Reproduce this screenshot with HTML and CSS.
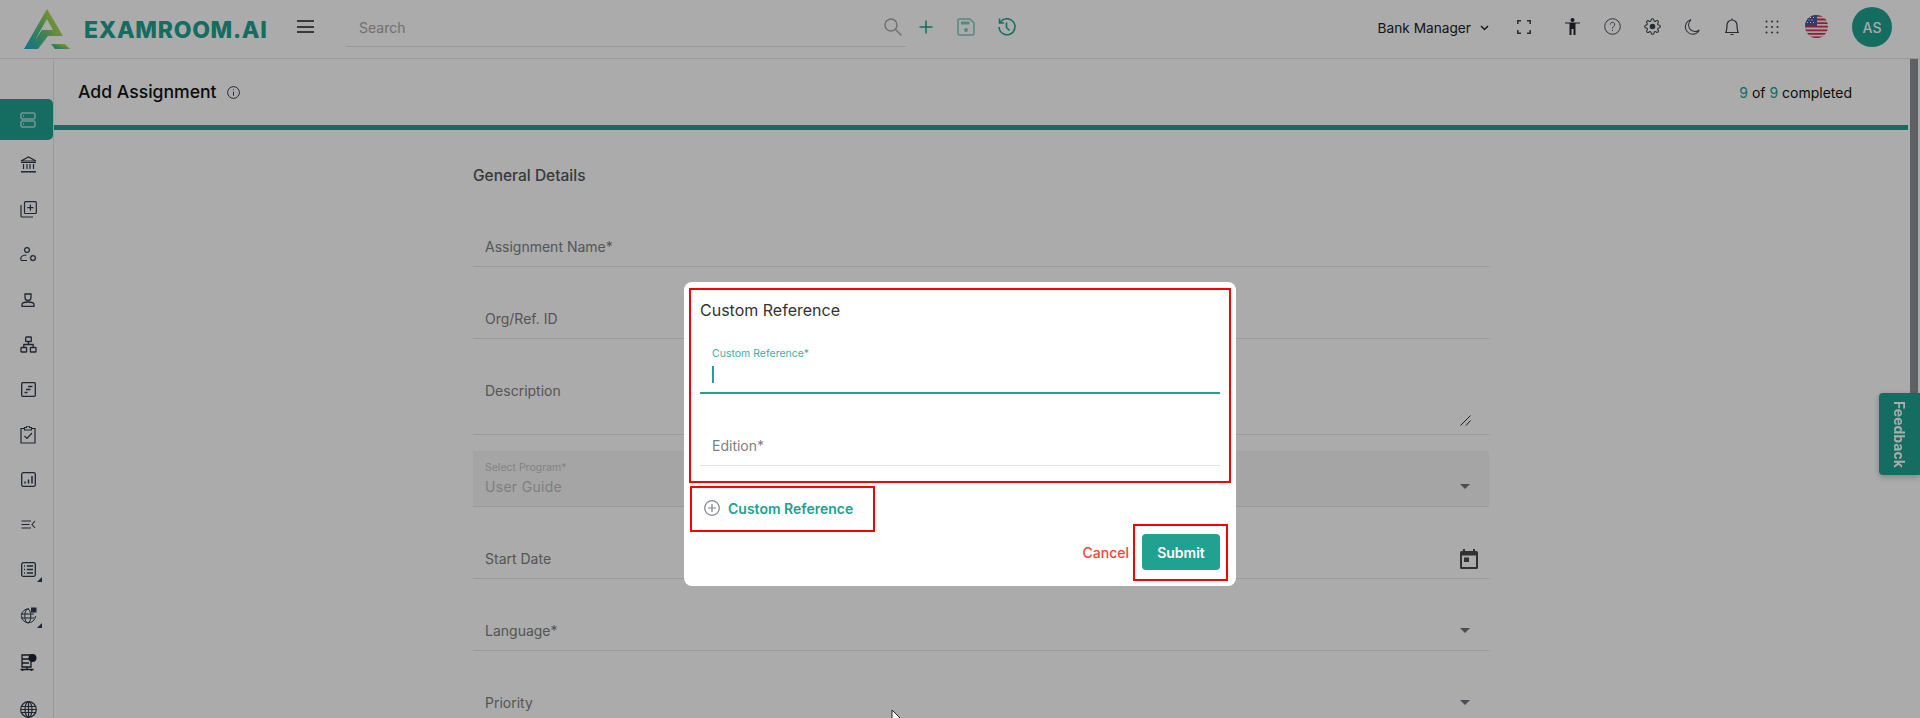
FILE: index.html
```html
<!DOCTYPE html>
<html lang="en">
<head>
<meta charset="utf-8">
<title>Add Assignment</title>
<link rel="stylesheet" href="styles.css">
</head>
<body>
<header class="topbar">
  <a class="brand">
    <svg class="logo" width="46" height="40" viewBox="0 0 46 40">
      <defs><linearGradient id="lg" x1="0" y1="1" x2="1" y2="0.35"><stop offset="0" stop-color="#1fa8d8"/><stop offset="0.5" stop-color="#55c47e"/><stop offset="1" stop-color="#cfe232"/></linearGradient></defs>
      <path fill="url(#lg)" fill-rule="evenodd" d="M23 0L39 27H24L14 40H0ZM23 10L11 31L18 21H29Z"/>
      <path fill="url(#lg)" d="M27 35H41L46 40H31Z"/>
    </svg>
    <span class="brand-text">EXAMROOM.AI</span>
  </a>
  <button class="burger"><span></span><span></span><span></span></button>
  <div class="search">
    <span class="search-text">Search</span>
    <svg width="18" height="18" viewBox="0 0 18 18" fill="none" stroke="#a6a6a6" stroke-width="1.4"><circle cx="7" cy="7" r="6"/><path d="M11.3 11.3L17.5 17.5"/></svg>
  </div>
  <div class="slot"><svg width="14" height="14" viewBox="0 0 14 14" stroke="#20a191" stroke-width="1.5"><path d="M7 0.5V13.5M0.5 7H13.5"/></svg></div>
  <div class="slot"><svg width="18" height="18" viewBox="0 0 18 18" fill="none" stroke="#83c9bf" stroke-width="1.5"><path d="M2.5 1H13L17 5V15.500a1.500 1.500 0 0 1-1.500 1.500H2.500A1.500 1.500 0 0 1 1 15.500V2.500A1.500 1.500 0 0 1 2.500 1Z"/><path d="M4 3.500H12.500V6.500H4Z" fill="#83c9bf" stroke="none"/><circle cx="9" cy="12" r="2" fill="#83c9bf" stroke="none"/></svg></div>
  <div class="slot"><svg width="19" height="18" viewBox="0 0 19 18" fill="none" stroke="#20a191" stroke-width="1.500"><path d="M3.200 4.500A8 8 0 1 1 2 9"/><path d="M2.500 0.500V5H7" /><path d="M9.500 4.500V9.500L12.500 12.500"/></svg></div>

  <div class="role">Bank Manager
    <svg width="9" height="6" viewBox="0 0 9 6" fill="none" stroke="#222" stroke-width="1.500"><path d="M1 1L4.500 4.500L8 1"/></svg>
  </div>
  <div class="tool tool-wide"><svg width="14" height="14" viewBox="0 0 14 14" fill="none" stroke="#3a3f4b" stroke-width="1.500"><path d="M0.800 4V0.800H4M10 0.800H13.200V4M13.200 10V13.200H10M4 13.200H0.800V10"/></svg></div>
  <div class="tool"><svg width="15" height="17" viewBox="0 0 15 17" fill="#2a2530"><circle cx="7.500" cy="2" r="2"/><path d="M0 4.500H15V5.500H10.500V17H8.500V11H6.500V17H4.500V5.500H0Z"/></svg></div>
  <div class="tool"><svg width="17" height="17" viewBox="0 0 17 17" fill="none" stroke="#4a4f5c" stroke-width="1"><circle cx="8.500" cy="8.500" r="7.800"/><path d="M6.300 6.500a2.200 2.200 0 1 1 3.500 1.800C8.900 9 8.500 9.500 8.500 10.500M8.500 12V13"/></svg></div>
  <div class="tool"><svg width="17" height="17" viewBox="0 0 24 24" fill="none" stroke="#3a3f4b" stroke-width="1.500"><path d="M19.4 15a1.650 1.650 0 0 0 .33 1.820l.06.06a2 2 0 0 1 0 2.830 2 2 0 0 1-2.830 0l-.06-.06a1.650 1.650 0 0 0-1.820-.33 1.650 1.650 0 0 0-1 1.510V21a2 2 0 0 1-2 2 2 2 0 0 1-2-2v-.09A1.650 1.650 0 0 0 9 19.400a1.650 1.650 0 0 0-1.820.33l-.06.06a2 2 0 0 1-2.830 0 2 2 0 0 1 0-2.830l.06-.06a1.650 1.650 0 0 0 .33-1.820 1.650 1.650 0 0 0-1.510-1H3a2 2 0 0 1-2-2 2 2 0 0 1 2-2h.09A1.650 1.650 0 0 0 4.600 9a1.650 1.650 0 0 0-.33-1.820l-.06-.06a2 2 0 0 1 0-2.830 2 2 0 0 1 2.830 0l.06.06a1.650 1.650 0 0 0 1.820.33H9a1.650 1.650 0 0 0 1-1.510V3a2 2 0 0 1 2-2 2 2 0 0 1 2 2v.09a1.650 1.650 0 0 0 1 1.510 1.650 1.650 0 0 0 1.820-.33l.06-.06a2 2 0 0 1 2.830 0 2 2 0 0 1 0 2.830l-.06.06a1.650 1.650 0 0 0-.33 1.820V9a1.650 1.650 0 0 0 1.510 1H21a2 2 0 0 1 2 2 2 2 0 0 1-2 2h-.09a1.650 1.650 0 0 0-1.510 1z"/><circle cx="12" cy="12" r="3.200" fill="#3a3f4b"/></svg></div>
  <div class="tool"><svg width="16" height="16" viewBox="0 0 16 16" fill="none" stroke="#4a4f5c" stroke-width="1.100"><path d="M7 .8A7.300 7.300 0 1 0 15.300 11 6.500 6.500 0 0 1 7 .8Z"/></svg></div>
  <div class="tool"><svg width="14" height="18" viewBox="0 0 14 18" fill="none" stroke="#3a3f4b" stroke-width="1.200"><path d="M0.500 14.500H13.500C12 13 12 11.500 12 7A5 5 0 0 0 2 7C2 11.500 2 13 0.500 14.500Z"/><path d="M7 0.500V2M5.500 16.500H8.500"/></svg></div>
  <div class="tool"><svg width="14" height="14" viewBox="0 0 14 14" fill="#3a3f4b"><circle cx="1.500" cy="1.500" r="1"/><circle cx="7" cy="1.500" r="1"/><circle cx="12.500" cy="1.500" r="1"/><circle cx="1.500" cy="7" r="1"/><circle cx="7" cy="7" r="1"/><circle cx="12.500" cy="7" r="1"/><circle cx="1.500" cy="12.500" r="1"/><circle cx="7" cy="12.500" r="1"/><circle cx="12.500" cy="12.500" r="1"/></svg></div>
  <div class="lang">
    <svg width="23" height="23" viewBox="0 0 23 23">
      <defs><clipPath id="fc"><circle cx="11.500" cy="11.500" r="11.500"/></clipPath></defs>
      <g clip-path="url(#fc)">
        <rect width="23" height="23" fill="#f2f2f2"/>
        <path d="M0 0H23V1.800H0ZM0 3.600H23V5.400H0ZM0 7.200H23V9H0ZM0 10.800H23V12.600H0ZM0 14.400H23V16.200H0ZM0 18H23V19.800H0ZM0 21.400H23V23H0Z" fill="#d8324a"/>
        <rect width="12" height="11" fill="#4a5a9e"/>
        <path d="M2 2h1v1H2zM5 2h1v1H5zM8 2h1v1H8zM3.500 4.500h1v1h-1zM6.500 4.500h1v1h-1zM2 7h1v1H2zM5 7h1v1H5zM8 7h1v1H8z" fill="#fff"/>
      </g>
    </svg>
  </div>
  <div class="avatar">AS</div>
</header>

<div class="main">
  <nav class="sidebar">
    <a class="nav nav-active"><svg width="16" height="16" viewBox="0 0 16 16" fill="none" stroke="#ffffff" stroke-width="1"><rect x="1" y="1" width="14" height="6" rx="1"/><rect x="1" y="9" width="14" height="6" rx="1"/><path d="M3 4H4M3 12H4"/></svg></a>
    <a class="nav"><svg width="17" height="17" viewBox="0 0 17 17" fill="none" stroke="#2f3b4c" stroke-width="1.200"><path d="M1 5L8.500 1L16 5Z"/><path d="M1 6.500H16M3.500 8V13M7 8V13M10 8V13M13.500 8V13" /><path d="M1 15.800H16" stroke-width="1.500"/></svg></a>
    <a class="nav"><svg width="17" height="17" viewBox="0 0 17 17" fill="none" stroke="#2f3b4c" stroke-width="1.200"><rect x="4.500" y="0.700" width="11.800" height="11.800" rx="1"/><path d="M1 4V15a1 1 0 0 0 1 1H13M10.400 3.500V9.700M7.300 6.600H13.500"/></svg></a>
    <a class="nav"><svg width="17" height="16" viewBox="0 0 17 16" fill="none" stroke="#2f3b4c" stroke-width="1.200"><circle cx="7" cy="3" r="2.400"/><path d="M0.800 13V11.500C0.800 9.500 3.500 8 6.500 8M0.800 13.500H7"/><circle cx="13" cy="11" r="2.300" stroke-width="1.100"/><path d="M13 7.800V8.700M13 13.300V14.200M9.800 11H10.700M15.300 11H16.200M10.700 8.700L11.400 9.400M14.600 12.600L15.300 13.300M15.300 8.700L14.600 9.400M11.400 12.600L10.700 13.300"/></svg></a>
    <a class="nav"><svg width="14" height="14" viewBox="0 0 14 14" fill="none" stroke="#2f3b4c" stroke-width="1.300"><path d="M4 1H10V4.500a3 3 0 0 1-6 0Z"/><path d="M1 13.300V11.500C1 10 3 9 7 9S13 10 13 11.500V13.300Z"/></svg></a>
    <a class="nav"><svg width="17" height="17" viewBox="0 0 17 17" fill="none" stroke="#2f3b4c" stroke-width="1.300"><rect x="5.700" y="1" width="5.600" height="4.500" rx=".6"/><rect x="1" y="11.500" width="5.600" height="4.500" rx=".6"/><rect x="10.400" y="11.500" width="5.600" height="4.500" rx=".6"/><path d="M8.500 5.500V8.500M3.800 11.500V8.500H13.200V11.500"/></svg></a>
    <a class="nav"><svg width="15" height="15" viewBox="0 0 15 15" fill="none" stroke="#2f3b4c" stroke-width="1.300"><rect x="0.700" y="0.700" width="13.600" height="13.600" rx="1"/><path d="M7 4.500H11.500M5 7.500H9.500M3.500 10.500H6.500" /></svg></a>
    <a class="nav"><svg width="16" height="18" viewBox="0 0 16 18" fill="none" stroke="#2f3b4c" stroke-width="1.200"><path d="M4.500 2.500H1V17H15V2.500H11.500"/><path d="M4.500 1.500H6.500A1.500 1.500 0 0 1 9.500 1.500H11.500V4H4.500Z"/><path d="M4.500 10L7 12.500L12 7"/></svg></a>
    <a class="nav"><svg width="15" height="15" viewBox="0 0 15 15" fill="none" stroke="#2f3b4c" stroke-width="1.300"><rect x="0.700" y="0.700" width="13.600" height="13.600" rx="1.500"/><path d="M4 11.500V9.500M7.500 11.500V7.500M11 11.500V4" stroke-width="1.500"/></svg></a>
    <a class="nav"><svg width="15" height="9" viewBox="0 0 15 9" fill="none" stroke="#2f3b4c" stroke-width="1.100"><path d="M0.500 1H10M0.500 4.500H8.500M0.500 8H10M14 1L11 4.500L14 8"/></svg></a>
    <a class="nav nav-more"><svg width="15" height="15" viewBox="0 0 15 15" fill="none" stroke="#2f3b4c" stroke-width="1.300"><rect x="0.700" y="0.700" width="13.600" height="13.600" rx="1.500"/><path d="M3 4H4M3 7.500H4M3 11H4M5.800 4H12M5.800 7.500H12M5.800 11H12"/></svg></a>
    <a class="nav nav-more"><svg width="17" height="17" viewBox="0 0 17 17" fill="none" stroke="#2f3b4c" stroke-width="1"><path d="M9 1.800A7 7 0 1 0 15.500 9"/><ellipse cx="7.800" cy="9" rx="3" ry="7"/><path d="M1 7H14M1 11H14"/><rect x="11" y="0.500" width="5.500" height="5" fill="#2f3b4c" stroke="none"/></svg></a>
    <a class="nav nav-late"><svg width="17" height="18" viewBox="0 0 17 18" fill="none" stroke="#1c2533" stroke-width="1.300"><path d="M2 1H11V13H2ZM2 5H9M2 9H9"/><path d="M0.500 15.500H13.500M2.500 17V15.500M11.500 17V15.500M7 13V15.500"/><circle cx="12.500" cy="4" r="4" fill="#1c2533" stroke="none"/></svg></a>
    <a class="nav nav-late"><svg width="17" height="17" viewBox="0 0 17 17" fill="none" stroke="#2f3b4c" stroke-width="1.200"><circle cx="8.500" cy="8.500" r="7.800"/><ellipse cx="8.500" cy="8.500" rx="3.500" ry="7.800"/><path d="M1 5.500H16M1 8.500H16M1 11.500H16M8.500 1V16"/></svg></a>
  </nav>

  <section class="content">
    <div class="pagehead">
      <h1 class="pagetitle">Add Assignment</h1>
      <svg class="info" width="13" height="13" viewBox="0 0 13 13" fill="none" stroke="#3a3f4b" stroke-width="1"><circle cx="6.500" cy="6.500" r="5.900"/><path d="M6.500 5.800V9.700M6.500 3.300V4.300"/></svg>
      <div class="steps"><b>9</b> of <b>9</b> completed</div>
    </div>
    <div class="progress"></div>
    <form class="form">
      <h2 class="section-title">General Details</h2>
      <div class="field"><span class="flabel">Assignment Name*</span></div>
      <div class="field"><span class="flabel">Org/Ref. ID</span></div>
      <div class="field field-area"><span class="flabel">Description</span>
        <svg class="resizer" width="11" height="11" viewBox="0 0 11 11" stroke="#333" stroke-width="1"><path d="M0.500 10.500L10.500 0.500M6 10.500L10.500 5.500"/></svg>
      </div>
      <div class="field field-disabled">
        <div class="stack"><span class="fsmall">Select Program*</span><span class="fvalue">User Guide</span></div>
        <i class="caret-down"></i>
      </div>
      <div class="field"><span class="flabel">Start Date</span>
        <svg class="cal" width="18" height="20" viewBox="0 0 18 20" fill="#4a4a4a"><path d="M3 0H5V2H13V0H15V2H16.500A1.500 1.500 0 0 1 18 3.500V18.500A1.500 1.500 0 0 1 16.500 20H1.500A1.500 1.500 0 0 1 0 18.500V3.500A1.500 1.500 0 0 1 1.500 2H3ZM2 6.500V18H16V6.500ZM4 8.500H9V13H4Z" fill-rule="evenodd"/></svg>
      </div>
      <div class="field"><span class="flabel">Language*</span><i class="caret-down"></i></div>
      <div class="field"><span class="flabel">Priority</span><i class="caret-down"></i></div>
    </form>
  </section>

  <div class="scrolltrack"><div class="scrollthumb"></div></div>
</div>

<div class="feedback"><span>Feedback</span></div>

<div class="overlay">
  <div class="modal">
    <h3 class="modal-title">Custom Reference</h3>
    <div class="mfield mfield-focus">
      <span class="mlabel-small">Custom Reference*</span>
      <span class="mcaret"></span>
    </div>
    <div class="mfield"><span class="mlabel">Edition*</span></div>
    <div class="madd">
      <svg width="16" height="16" viewBox="0 0 16 16" fill="none" stroke="#7f8493" stroke-width="1.200"><circle cx="8" cy="8" r="7.300"/><path d="M8 4V12M4 8H12"/></svg>
      <span>Custom Reference</span>
    </div>
    <div class="mfoot">
      <button class="mcancel" type="button">Cancel</button>
      <button class="msubmit" type="button">Submit</button>
    </div>
    <div class="mark mark-fields"></div>
    <div class="mark mark-add"></div>
    <div class="mark mark-submit"></div>
  </div>
</div>
<svg class="pointer" width="10" height="16" viewBox="0 0 10 16"><path d="M1 1V13L4 10.500L6 15L8 14L6 9.500H9.500Z" fill="#fff" stroke="#222" stroke-width="1"/></svg>
</body>
</html>
```
FILE: styles.css
```css
* { box-sizing: border-box; }
html, body { height: 718px; }
body {
  margin: 0;
  overflow: hidden;
  background: #fff;
  font-family: Inter, "Liberation Sans", sans-serif;
  color: #222;
  display: flex;
  flex-direction: column;
}

/* top bar */
.topbar {
  height: 59px;
  flex: none;
  display: flex;
  align-items: center;
  padding: 0 28px 0 24px;
  border-bottom: 1px solid #e4e4e4;
}
.brand { display: flex; align-items: center; width: 273px; }
.logo { display: block; margin-top: -1px; }
.brand-text {
  margin-left: 14px;
  font-size: 23px;
  font-weight: 800;
  letter-spacing: 0.7px;
  color: #20a191;
  line-height: 28px;
  margin-top: 2px;
}
.burger {
  width: 17px;
  height: 13px;
  padding: 0;
  border: 0;
  background: none;
  display: flex;
  flex-direction: column;
  justify-content: space-between;
  margin-top: -5px;
}
.burger span { display: block; height: 2px; background: #555; }
.search {
  width: 560px;
  height: 39px;
  margin: -3px 0 0 32px;
  padding: 0 4px 0 13px;
  border-bottom: 1px solid #e4e4e4;
  display: flex;
  align-items: center;
  justify-content: space-between;
}
.search-text { font-size: 14px; color: #a6a8b0; }
.slot { width: 40px; height: 40px; display: flex; align-items: center; justify-content: center; margin-top: -4px; }
.slot:last-of-type { margin-left: -1px; }
.role {
  margin-left: auto;
  display: flex;
  align-items: center;
  gap: 9px;
  font-size: 13.7px;
  color: #222;
  margin-right: 15px;
  margin-top: -3px;
}
.tool { width: 40px; height: 40px; display: flex; align-items: center; justify-content: center; margin-top: -5px; }
.tool-wide { margin-right: 8px; }
.lang { width: 48px; height: 40px; display: flex; align-items: center; justify-content: center; margin-top: -5px; }
.avatar {
  width: 40px;
  height: 40px;
  margin-left: 12px;
  margin-top: -4px;
  border-radius: 50%;
  background: #20a191;
  color: #fff;
  font-size: 14px;
  font-weight: 500;
  display: flex;
  align-items: center;
  justify-content: center;
}

/* body */
.main { flex: 1; display: flex; min-height: 0; }
.sidebar {
  width: 54px;
  flex: none;
  padding-top: 40px;
  border-right: 1px solid #e4e4e4;
  overflow: hidden;
  display: flex;
  flex-direction: column;
  gap: 4px;
}
.nav {
  flex: none;
  position: relative;
  width: 53px;
  height: 41px;
  display: flex;
  align-items: center;
  justify-content: center;
  padding-left: 3px;
}
.nav-active { background: #20a191; border-radius: 0 5px 5px 0; }
.nav-more::after {
  content: "";
  position: absolute;
  left: 37px;
  bottom: 8px;
  width: 0;
  height: 0;
  border-left: 5px solid transparent;
  border-bottom: 5px solid #2f3b4c;
}
.nav-more + .nav-more { margin-top: 1px; }
.nav-late { margin-top: 2px; }

.content { flex: 1; min-width: 0; display: flex; flex-direction: column; }
.pagehead { height: 66px; flex: none; display: flex; align-items: center; padding: 0 56px 0 24px; }
.pagetitle { margin: 0; font-size: 17.6px; line-height: 24px; font-weight: 500; color: #111; }
.info { margin-left: 10px; }
.steps { margin-left: auto; font-size: 14px; color: #111; padding-top: 1px; }
.steps b { font-weight: 400; color: #20a191; }
.progress { height: 5px; flex: none; background: #20a191; }

.form { width: 1016px; margin: 0 auto; padding-top: 36px; }
.section-title { margin: 0 0 25px; font-size: 15.5px; line-height: 20px; font-weight: 500; color: #555; }
.field {
  position: relative;
  height: 56px;
  margin-bottom: 16px;
  padding: 0 12px 9px;
  border-bottom: 1px solid #e4e4e4;
  display: flex;
  align-items: flex-end;
  justify-content: space-between;
}
.flabel { font-size: 14px; line-height: 20px; color: #808080; }
.field-area { height: 80px; padding-top: 26px; align-items: flex-start; }
.resizer { position: absolute; right: 18px; bottom: 8px; }
.cal { margin-right: -1px; }
.field-disabled { background: #f6f6f6; }
.stack { display: flex; flex-direction: column; }
.fsmall { font-size: 10.5px; line-height: 14px; color: #c4c4c4; margin-bottom: 2px; }
.fvalue { font-size: 14px; line-height: 20px; color: #bdbdbd; letter-spacing: .3px; }
.caret-down {
  width: 0;
  height: 0;
  border-left: 5px solid transparent;
  border-right: 5px solid transparent;
  border-top: 5px solid #6f7280;
  margin: 0 7px 8px 0;
}

.scrolltrack { width: 12px; flex: none; padding-left: 2px; }
.scrollthumb { width: 8px; height: 334px; background: #8d9096; }

.feedback {
  position: fixed;
  right: 0;
  top: 393px;
  width: 41px;
  height: 82px;
  background: #20a191;
  border-radius: 4px 0 0 4px;
  box-shadow: 0 2px 6px rgba(0,0,0,.25);
  color: #fff;
  font-size: 14px;
  font-weight: 700;
  writing-mode: vertical-rl;
  display: flex;
  align-items: center;
  justify-content: center;
}

/* dialog */
.overlay {
  position: fixed;
  inset: 0;
  background: rgba(0,0,0,.33);
  display: flex;
  justify-content: center;
  padding-top: 282px;
}
.modal {
  position: relative;
  width: 552px;
  height: 304px;
  background: #fff;
  border-radius: 8px;
  padding: 16px;
}
.modal-title { margin: 0 0 16px; font-size: 16px; line-height: 24px; font-weight: 400; color: #333; }
.mfield {
  height: 56px;
  margin-bottom: 16px;
  padding: 0 12px 9px;
  border-bottom: 1px solid #e4e4e4;
  display: flex;
  flex-direction: column;
  justify-content: flex-end;
}
.mfield-focus { border-bottom: 2px solid #20a191; }
.mlabel { font-size: 14px; line-height: 20px; color: #808080; }
.mlabel-small { font-size: 10.5px; line-height: 14px; color: #20a191; opacity: .85; margin-bottom: 5px; }
.mcaret { width: 2px; height: 17px; background: #20a191; }
.madd {
  margin: 32px 0 16px 4px;
  height: 20px;
  display: flex;
  align-items: center;
  gap: 8px;
  font-size: 14px;
  font-weight: 600;
  color: #20a191;
}
.mfoot { display: flex; justify-content: flex-end; align-items: center; gap: 13px; }
.mcancel {
  border: 0;
  background: none;
  padding: 2px 0 0;
  font: 500 14px/20px Inter, "Liberation Sans", sans-serif;
  color: #f44336;
}
.msubmit {
  width: 78px;
  height: 36px;
  border: 0;
  border-radius: 4px;
  background: #20a191;
  color: #fff;
  padding: 2px 0 0;
  font: 600 14px/20px Inter, "Liberation Sans", sans-serif;
}
.mark { position: absolute; border: 2px solid #f00; }
.mark-fields { left: 5px; top: 6px; width: 542px; height: 195px; }
.mark-add { left: 6px; top: 204px; width: 185px; height: 46px; }
.mark-submit { left: 449px; top: 242px; width: 95px; height: 57px; }

.pointer { position: fixed; left: 891px; top: 709px; }
```
